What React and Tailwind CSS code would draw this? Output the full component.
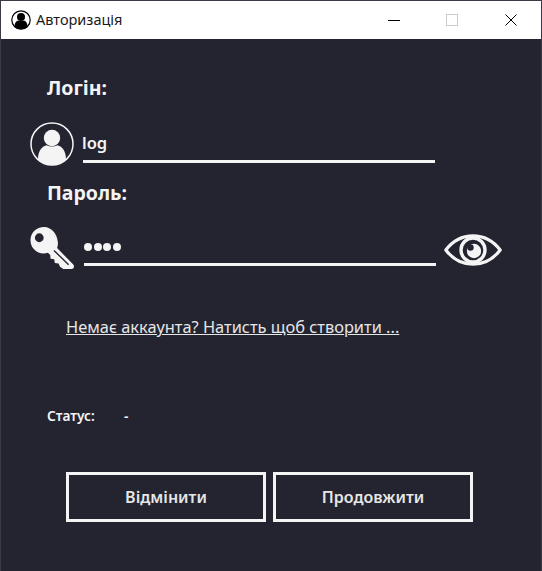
import React from "react";

function UserIcon({ className }) {
  return (
    <svg viewBox="0 0 44 44" className={className}>
      <circle cx="22" cy="22" r="21" fill="none" stroke="currentColor" strokeWidth="1.500" />
      <circle cx="22" cy="16" r="8.200" fill="currentColor" />
      <path
        d="M8 37.500c0-8 3.500-13 8.500-14.200 3.500 1.600 7.500 1.600 11 0C32.500 24.500 36 29.500 36 37.500 32 41.500 27 43.200 22 43.200S12 41.500 8 37.500z"
        fill="currentColor"
      />
    </svg>
  );
}

function KeyIcon({ className }) {
  return (
    <svg viewBox="0 0 46 46" className={className}>
      <path
        fillRule="evenodd"
        fill="currentColor"
        d="M15 1C7 1 1 7 1 14.500 1 22 7 28 14.500 28c1.500 0 3-.2 4.300-.7l2.400 2.400.3 3.800 3.800.6.6 3.700 3.800.5 1.500 3.300 3.300 2.400h8.500c1.500 0 2.500-1 2.500-2.500 0-1-.4-1.700-1-2.300L28.200 22.500C29 20.500 29.200 18.500 29 16.500 28.300 7.500 22 1 15 1zM10 7.500a4.500 4.500 0 1 1 0 9 4.500 4.500 0 0 1 0-9z"
      />
      <path d="M25 25l15 14.500" stroke="#232430" strokeWidth="1.400" fill="none" />
    </svg>
  );
}

function EyeIcon({ className }) {
  return (
    <svg viewBox="0 0 58 32" className={className}>
      <path
        d="M1.800 16C9 6.500 18.500 1.800 29 1.800S49 6.500 56.200 16C49 25.500 39.500 30.200 29 30.200S9 25.500 1.800 16z"
        fill="none"
        stroke="currentColor"
        strokeWidth="3.200"
        strokeLinejoin="round"
      />
      <circle cx="29" cy="16" r="12" fill="none" stroke="currentColor" strokeWidth="3.400" />
      <circle cx="30" cy="17" r="7.200" fill="currentColor" />
      <circle cx="26.500" cy="13.500" r="3.200" fill="#232430" />
    </svg>
  );
}

function TitleIcon() {
  return (
    <svg viewBox="0 0 20 20" className="w-[20px] h-[20px] text-black">
      <circle cx="10" cy="10" r="9.200" fill="none" stroke="currentColor" strokeWidth="1.200" />
      <circle cx="10" cy="7" r="4" fill="currentColor" />
      <path d="M3.500 17c0-4 1.500-6 3.500-6.500 2 .8 4 .8 6 0 2 .5 3.500 2.500 3.500 6.500-3.500 3-9.500 3-13 0z" fill="currentColor" />
    </svg>
  );
}

export default function App() {
  return (
    <div className="w-[542px] h-[571px] bg-[#232430] border-t border-x border-[#3a3b44] overflow-hidden font-['Noto_Sans','Open_Sans',sans-serif] text-[#f4f4f4]">
      {/* title bar */}
      <div className="h-[38px] bg-white flex items-center text-black">
        <div className="ml-[10px] mr-[5px] flex items-center">
          <TitleIcon />
        </div>
        <span className="text-[14.500px] text-[#1a1a1a]">Авторизація</span>
        <div className="ml-auto flex items-center">
          <div className="w-[12px] h-px bg-black mr-[46px]" />
          <div className="w-[12px] h-[12px] border border-[#cccccc] mr-[47px]" />
          <svg viewBox="0 0 12 12" className="w-[12px] h-[12px] mr-[24px]">
            <path d="M.5.500l11 11M11.500.500l-11 11" stroke="#000" strokeWidth="1" fill="none" />
          </svg>
        </div>
      </div>

      <div className="pt-[35px]">
        <div className="ml-[46px] h-[28px] leading-[28px] text-[19.500px] font-bold">Логін:</div>

        <div className="flex items-start mt-[20px] h-[44px]">
          <UserIcon className="ml-[29px] w-[44px] h-[44px] shrink-0 text-[#f4f4f4]" />
          <div className="ml-[9px] w-[352px] h-[41px] border-b-[3px] border-[#f4f4f4] pt-[9px] text-[16.500px] leading-[24px] font-semibold">
            <span className="-ml-px">log</span>
          </div>
        </div>

        <div className="ml-[46px] mt-[13px] h-[28px] leading-[28px] text-[19.500px] font-bold">Пароль:</div>

        <div className="flex items-start mt-[19px] h-[44px]">
          <KeyIcon className="ml-[28px] w-[46px] h-[45px] shrink-0 text-[#f4f4f4]" />
          <div className="ml-[9px] w-[352px] h-[40px] border-b-[3px] border-[#f4f4f4] flex items-center gap-[1.500px] pt-[5px]">
            <span className="w-[8px] h-[8px] rounded-full bg-[#f4f4f4]" />
            <span className="w-[8px] h-[8px] rounded-full bg-[#f4f4f4]" />
            <span className="w-[8px] h-[8px] rounded-full bg-[#f4f4f4]" />
            <span className="w-[8px] h-[8px] rounded-full bg-[#f4f4f4]" />
          </div>
          <EyeIcon className="ml-[8px] mt-[8px] w-[58px] h-[32px] shrink-0 text-[#f4f4f4]" />
        </div>

        <div className="ml-[65px] mt-[45px] h-[24px] leading-[24px] text-[16.400px] text-[#e6e6e6] underline whitespace-nowrap">
          Немає аккаунта? Натисть щоб створити ...
        </div>

        <div className="flex ml-[46px] mt-[67px] h-[20px] leading-[20px] text-[13.700px] font-semibold">
          <span className="w-[77px]">Статус:</span>
          <span>-</span>
        </div>

        <div className="flex ml-[65px] mt-[46px] gap-[7px]">
          <button className="w-[200px] h-[50px] border-[3px] border-[#f4f4f4] text-[16px] font-semibold text-[#e6e6e6]">
            Відмінити
          </button>
          <button className="w-[200px] h-[50px] border-[3px] border-[#f4f4f4] text-[16px] font-semibold text-[#e6e6e6]">
            Продовжити
          </button>
        </div>
      </div>
    </div>
  );
}
